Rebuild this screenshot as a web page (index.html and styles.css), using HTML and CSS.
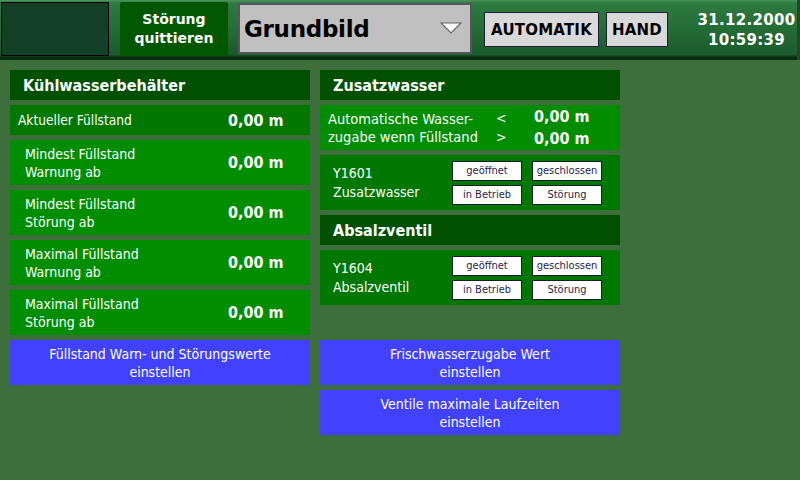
FILE: index.html
```html
<!DOCTYPE html>
<html lang="de">
<head>
<meta charset="utf-8">
<title>Grundbild</title>
<link rel="stylesheet" href="styles.css">
</head>
<body>
<div class="topbar">
  <div class="logo-box"></div>
  <div class="btn-quit">Störung<br>quittieren</div>
  <div class="dropdown">
    <span class="dd-text">Grundbild</span>
    <svg class="dd-arrow" width="22" height="12" viewBox="0 0 22 12"><polygon points="1,1 21,1 11,11" fill="#ffffff" stroke="#606068" stroke-width="1.2"/></svg>
  </div>
  <div class="mode-btn mode-auto">AUTOMATIK</div>
  <div class="mode-btn mode-hand">HAND</div>
  <div class="datetime">31.12.2000<br>10:59:39</div>
</div>

<div class="main">
  <div class="col">
    <div class="head">Kühlwasserbehälter</div>
    <div class="row row-dark row-short">
      <span class="lbl lbl-first">Aktueller Füllstand</span>
      <span class="val">0,00 m</span>
    </div>
    <div class="row row-light">
      <span class="lbl">Mindest Füllstand<br>Warnung ab</span>
      <span class="val">0,00 m</span>
    </div>
    <div class="row row-light">
      <span class="lbl">Mindest Füllstand<br>Störung ab</span>
      <span class="val">0,00 m</span>
    </div>
    <div class="row row-light">
      <span class="lbl">Maximal Füllstand<br>Warnung ab</span>
      <span class="val">0,00 m</span>
    </div>
    <div class="row row-light">
      <span class="lbl">Maximal Füllstand<br>Störung ab</span>
      <span class="val">0,00 m</span>
    </div>
    <div class="blue-btn">Füllstand Warn- und Störungswerte<br>einstellen</div>
  </div>

  <div class="col">
    <div class="head">Zusatzwasser</div>
    <div class="row row-light auto-row">
      <span class="auto-lbl">Automatische Wasser-<br>zugabe wenn Füllstand</span>
      <span class="cmp">&lt;<br>&gt;</span>
      <span class="auto-vals"><span>0,00 m</span><span>0,00 m</span></span>
    </div>
    <div class="row row-dark valve-row">
      <span class="valve-lbl">Y1601<br>Zusatzwasser</span>
      <div class="status-grid">
        <span class="st">geöffnet</span>
        <span class="st">geschlossen</span>
        <span class="st">in Betrieb</span>
        <span class="st">Störung</span>
      </div>
    </div>
    <div class="head">Absalzventil</div>
    <div class="row row-dark valve-row">
      <span class="valve-lbl">Y1604<br>Absalzventil</span>
      <div class="status-grid">
        <span class="st">geöffnet</span>
        <span class="st">geschlossen</span>
        <span class="st">in Betrieb</span>
        <span class="st">Störung</span>
      </div>
    </div>
    <div class="blue-btn blue-first">Frischwasserzugabe Wert<br>einstellen</div>
    <div class="blue-btn">Ventile maximale Laufzeiten<br>einstellen</div>
  </div>
</div>
</body>
</html>
```

FILE: styles.css
```css
* { box-sizing: border-box; }

html, body {
  margin: 0;
  padding: 0;
}

body {
  width: 800px;
  height: 480px;
  overflow: hidden;
  background: #3e6e3b;
  font-family: "DejaVu Sans Condensed", "DejaVu Sans", "Liberation Sans", sans-serif;
  color: #ffffff;
}

.topbar {
  height: 60px;
  display: flex;
  align-items: flex-start;
  padding: 2px 0 0 1px;
  background: linear-gradient(to bottom, #4e9660 0px, #2e7a40 3px, #246c36 30px, #1a5a2a 55px, #0a2a12 57px, #0a2a12 60px);
  border-right: 3px solid #1b4a25;
}

.logo-box {
  width: 108px;
  height: 54px;
  background: #123f26;
  border: 1px solid #000000;
}

.btn-quit {
  margin-left: 11px;
  width: 108px;
  height: 54px;
  background: #005700;
  font-family: "DejaVu Sans", "Liberation Sans", sans-serif;
  font-weight: bold;
  font-size: 14px;
  line-height: 19px;
  text-align: center;
  padding-top: 8px;
  border-radius: 2px;
}

.dropdown {
  margin-left: 10px;
  margin-top: 1px;
  width: 234px;
  height: 51px;
  background: #c0c0c0;
  border: 2px solid #55555f;
  display: flex;
  align-items: center;
  justify-content: space-between;
  padding: 0 8px 0 4px;
  color: #000000;
}

.dd-text {
  font-family: "DejaVu Sans", "Liberation Sans", sans-serif;
  font-weight: bold;
  font-size: 23px;
  letter-spacing: -0.3px;
}

.dd-arrow { display: block; margin-top: -2px; }

.mode-btn {
  margin-top: 10px;
  height: 35px;
  background: #d9d9d9;
  border: 1px solid #1e1e3a;
  color: #000000;
  font-family: "DejaVu Sans", "Liberation Sans", sans-serif;
  font-weight: bold;
  font-size: 15px;
  letter-spacing: 0.2px;
  display: flex;
  align-items: center;
  justify-content: center;
}

.mode-auto { margin-left: 12px; width: 115px; }
.mode-hand { margin-left: 7px; width: 62px; }

.datetime {
  flex: 1;
  text-align: center;
  padding-left: 28px;
  padding-top: 8px;
  font-family: "DejaVu Sans", "Liberation Sans", sans-serif;
  font-weight: bold;
  font-size: 15px;
  letter-spacing: 0.3px;
  line-height: 20px;
}

.main {
  display: grid;
  grid-template-columns: 300px 300px;
  column-gap: 10px;
  padding: 10px;
  align-items: start;
}

.col {
  display: flex;
  flex-direction: column;
  gap: 5px;
}

.head {
  height: 30px;
  background: #005000;
  font-weight: bold;
  font-size: 16px;
  display: flex;
  align-items: center;
  padding-left: 13px;
}

.row {
  height: 45px;
  display: flex;
  align-items: center;
}

.row-short { height: 30px; }
.row-dark { background: #007800; }
.row-light { background: #008e00; }

.lbl {
  flex: 1;
  font-size: 14px;
  line-height: 18px;
  padding-left: 15px;
}

.lbl-first { padding-left: 8px; font-size: 13.6px; }

.val {
  width: 55px;
  margin-right: 27px;
  font-weight: bold;
  font-size: 16px;
  white-space: nowrap;
}

.blue-btn {
  height: 45px;
  background: #4141ff;
  font-size: 14px;
  line-height: 18px;
  text-align: center;
  display: flex;
  align-items: center;
  justify-content: center;
}

.blue-first { margin-top: 30px; }

.auto-lbl {
  width: 176px;
  padding-left: 8px;
  font-size: 14.5px;
  line-height: 18px;
}

.cmp {
  width: 38px;
  font-size: 14px;
  line-height: 19px;
}

.auto-vals {
  display: flex;
  flex-direction: column;
  font-weight: bold;
  font-size: 16px;
  line-height: 22px;
  white-space: nowrap;
}

.valve-row { height: 55px; }

.valve-lbl {
  width: 132px;
  padding-left: 13px;
  font-size: 14px;
  line-height: 19px;
}

.status-grid {
  display: grid;
  grid-template-columns: 70px 70px;
  grid-auto-rows: 20px;
  column-gap: 10px;
  row-gap: 4px;
}

.st {
  background: #ffffff;
  border: 1px solid #1a1a36;
  color: #24244a;
  font-size: 11px;
  display: flex;
  align-items: center;
  justify-content: center;
  white-space: nowrap;
}
```
